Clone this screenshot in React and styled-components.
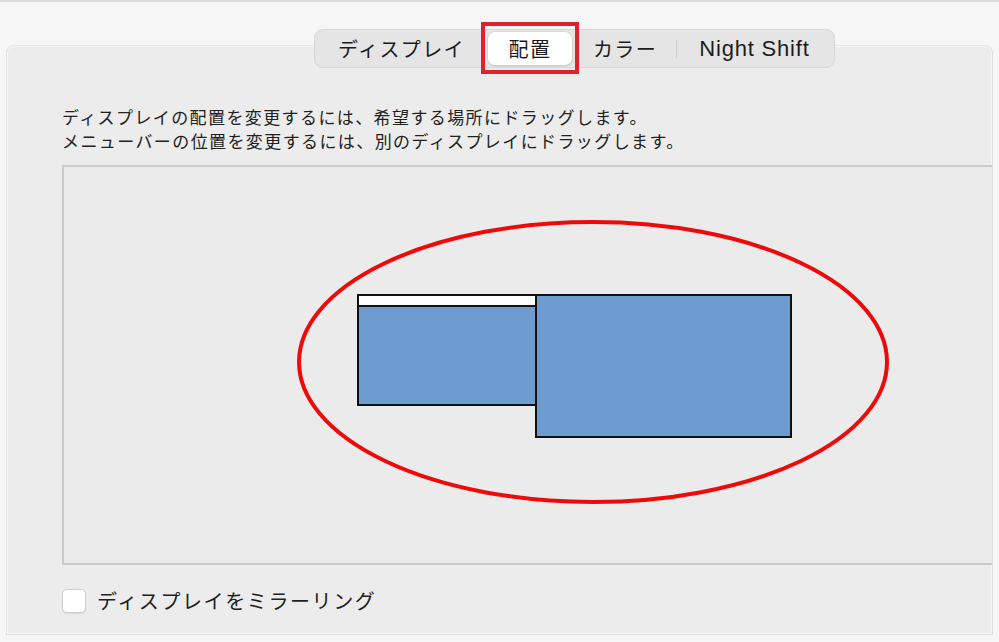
import React, {useState} from "react";
import styled, {createGlobalStyle} from "styled-components";

const GlobalStyle = createGlobalStyle`
body {
  margin: 0;
  background: #f6f6f6;
  font-family: "Liberation Sans", "Noto Sans CJK JP", sans-serif;
  color: #1e1e1e;
  overflow: hidden;
}
`

const Page = styled.div`
border-top: 2px solid #dadada;
padding-top: 27px;
height: 613px;
`

const TabBar = styled.div`
display: flex;
padding-left: 314px;
position: relative;
z-index: 2;
`

const Segments = styled.div`
display: flex;
align-items: center;
height: 37px;
padding: 0 2px;
background: #e5e5e5;
border: 1px solid #d7d7d7;
border-radius: 9px;
`

const Tab = styled.div`
position: relative;
display: flex;
align-items: center;
justify-content: center;
width: ${p => p.w}px;
height: 33px;
font-family: "Liberation Sans", "Noto Sans CJK JP", sans-serif;
font-size: ${p => p.latin ? 22 : 20}px;
letter-spacing: ${p => p.latin ? 0.8 : 1.4}px;
color: #1c1c1c;
border-radius: 7px;
background: ${p => p.active ? "#ffffff" : "transparent"};
box-shadow: ${p => p.active ? "0 0 0 0.5px #cfcfcf, 0 1px 2px rgba(0,0,0,0.18)" : "none"};
margin: 0 ${p => p.active ? 2 : 0}px;
`

const Divider = styled.span`
width: 1px;
height: 18px;
background: #cdcdcd;
`

const Highlight = styled.span`
position: absolute;
left: -7px;
top: -10px;
width: 90px;
height: 44px;
border: 4px solid #dc2430;
pointer-events: none;
`

const Panel = styled.div`
margin: -23px 6px 0 6px;
background: #ececec;
border: 1px solid #e0e0e0;
border-top-color: #e6e6e6;
border-radius: 8px 8px 0 0;
box-shadow: inset 0 0 0 1px #f7f7f7;
padding: 59px 0 0 55px;
box-sizing: border-box;
height: 590px;
`

const Description = styled.p`
margin: 0;
font-family: "Noto Sans CJK JP", sans-serif;
font-size: 17px;
letter-spacing: 1.4px;
line-height: 24px;
color: #222;
`

const Canvas = styled.div`
position: relative;
margin-top: 12px;
height: 396px;
background: #ebebeb;
border: 2px solid #cacaca;
border-right: none;
overflow: hidden;
`

const Screen = styled.div`
position: absolute;
left: ${p => p.x}px;
top: ${p => p.y}px;
width: ${p => p.w}px;
height: ${p => p.h}px;
box-sizing: border-box;
background: #6e9cd0;
border: 2px solid #111;
display: flex;
flex-direction: column;
`

const MenuBar = styled.div`
height: 9px;
background: #ffffff;
border-bottom: 2px solid #111;
`

const Annotation = styled.svg`
position: absolute;
left: 0;
top: 0;
pointer-events: none;
`

const MirrorRow = styled.label`
display: flex;
align-items: center;
gap: 11px;
margin-top: 21px;
`

const Check = styled.span`
width: 22px;
height: 22px;
background: ${p => p.on ? "#2f7cf6" : "#ffffff"};
border: 1px solid #cfcfcf;
border-radius: 5px;
box-shadow: 0 0.5px 1px rgba(0,0,0,0.08);
`

const CheckLabel = styled.span`
font-family: "Noto Sans CJK JP", sans-serif;
font-size: 20px;
letter-spacing: 1.6px;
color: #1e1e1e;
`

const tabs = [
    {label: "ディスプレイ", w: 169},
    {label: "配置", w: 84, active: true},
    {label: "カラー", w: 102},
    {divider: true},
    {label: "Night Shift", w: 155, latin: true},
]

export default function App() {
    const [mirror, setMirror] = useState(false);

    return(
        <Page>
            <GlobalStyle/>
            <TabBar>
                <Segments>
                    {tabs.map((t, i) => t.divider
                        ? <Divider key={i}/>
                        : <Tab key={i} w={t.w} active={t.active} latin={t.latin}>
                            {t.label}
                            {t.active && <Highlight/>}
                          </Tab>
                    )}
                </Segments>
            </TabBar>
            <Panel>
                <Description>
                    ディスプレイの配置を変更するには、希望する場所にドラッグします。<br/>
                    メニューバーの位置を変更するには、別のディスプレイにドラッグします。
                </Description>
                <Canvas>
                    <Screen x={293} y={127} w={180} h={112}>
                        <MenuBar/>
                    </Screen>
                    <Screen x={471} y={127} w={257} h={144}/>
                    <Annotation width="940" height="396">
                        <ellipse cx="529" cy="195" rx="294" ry="140" fill="none" stroke="#ee0a0a" strokeWidth="4"/>
                    </Annotation>
                </Canvas>
                <MirrorRow onClick={() => setMirror(!mirror)}>
                    <Check on={mirror}/>
                    <CheckLabel>ディスプレイをミラーリング</CheckLabel>
                </MirrorRow>
            </Panel>
        </Page>
    )
}
